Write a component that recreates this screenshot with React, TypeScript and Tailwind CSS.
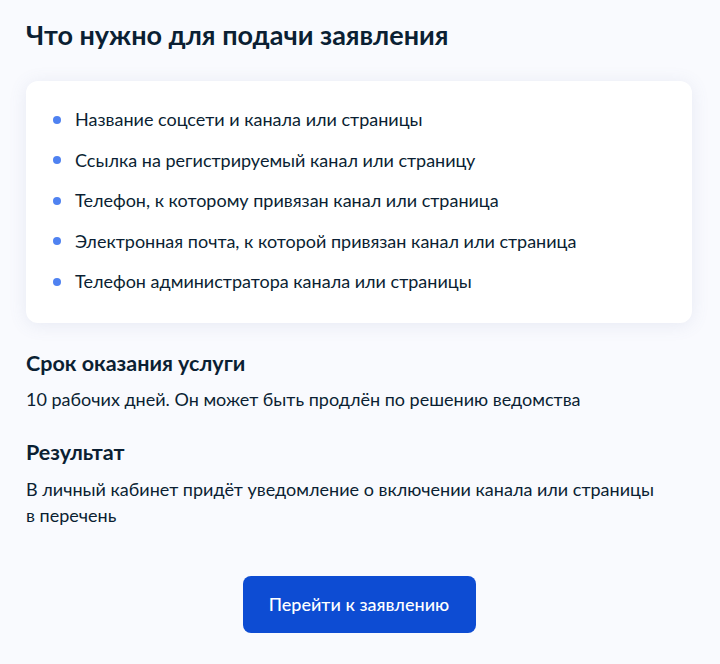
import React from "react";

const items = [
  "Название соцсети и канала или страницы",
  "Ссылка на регистрируемый канал или страницу",
  "Телефон, к которому привязан канал или страница",
  "Электронная почта, к которой привязан канал или страница",
  "Телефон администратора канала или страницы",
];

export default function App() {
  return (
    <div
      className="min-h-[664px] w-[720px] bg-[#f9fafe] text-[#0b1f33]"
      style={{ fontFamily: "Lato, 'Noto Sans', sans-serif" }}
    >
      <div className="pl-[26px] pr-[28px] pt-[17px] pb-[30px]">
        <h1 className="text-[27px] font-bold leading-[36px]">Что нужно для подачи заявления</h1>
        <div className="mt-[28px] rounded-[12px] bg-white px-[26px] pt-[25px] pb-[28px] shadow-[0_2px_18px_rgba(102,119,163,0.12)]">
          <ul className="flex flex-col gap-[13.5px]">
            {items.map((t) => (
              <li key={t} className="flex items-center text-[18px] leading-[27px]">
                <span className="mr-[14px] ml-[1px] h-[8px] w-[8px] shrink-0 rounded-full bg-[#4f82f1]" />
                <span>{t}</span>
              </li>
            ))}
          </ul>
        </div>
        <h2 className="mt-[26px] text-[21.5px] font-bold leading-[28px]">Срок оказания услуги</h2>
        <p className="mt-[8.5px] text-[18px] leading-[27px]">
          10 рабочих дней. Он может быть продлён по решению ведомства
        </p>
        <h2 className="mt-[25.5px] text-[21.5px] font-bold leading-[28px]">Результат</h2>
        <p className="mt-[10px] text-[18px] leading-[26px] max-w-[636px]">
          В личный кабинет придёт уведомление о включении канала или страницы в перечень
        </p>
        <div className="mt-[48px] flex justify-center">
          <button className="h-[57px] w-[233px] rounded-[8px] bg-[#0d4cd3] text-[18px] font-medium text-white">
            Перейти к заявлению
          </button>
        </div>
      </div>
    </div>
  );
}
